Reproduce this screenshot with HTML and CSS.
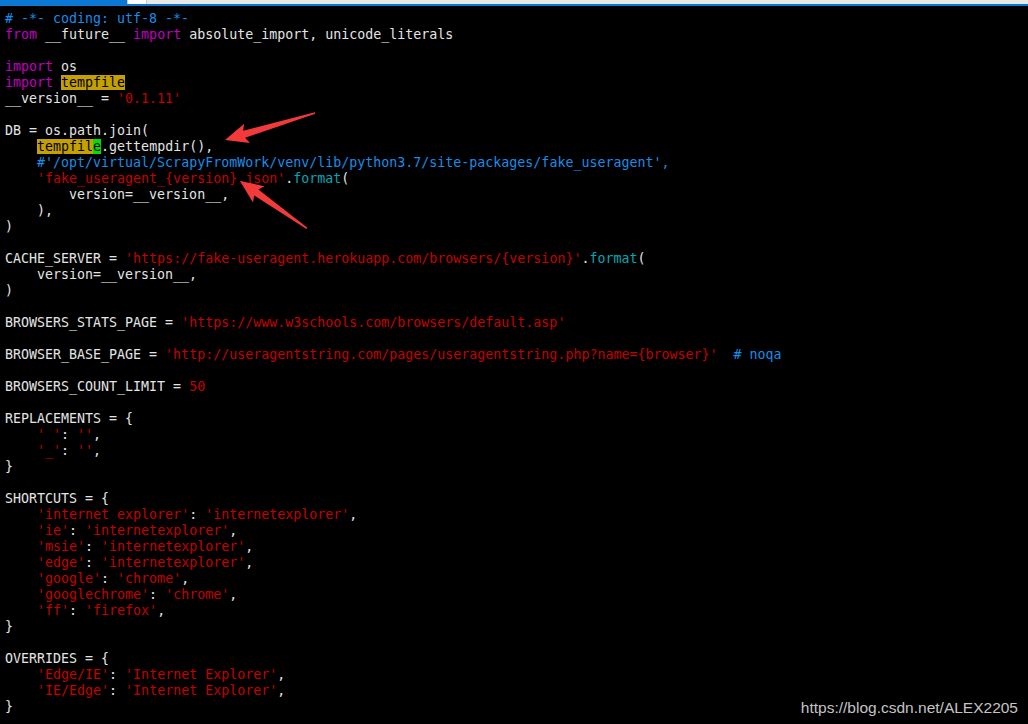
FILE: index.html
```html
<!DOCTYPE html>
<html lang="en">
<head>
    <meta charset="UTF-8">
    <title>settings.py - vim</title>
    <link rel="stylesheet" href="styles.css">
</head>
<body>
    <div class="tabbar">
        <div class="tab-active"></div>
        <div class="tab-blank"></div>
        <div class="tab-rest"></div>
    </div>
    <div class="tabline"></div>

    <div class="screen">
<pre class="code"><span class="cm"># -*- coding: utf-8 -*-</span>
<span class="kw">from</span> __future__ <span class="kw">import</span> absolute_import, unicode_literals

<span class="kw">import</span> os
<span class="kw">import</span> <span class="hl">tempfile</span>
__version__ = <span class="st">'0.1.11'</span>

DB = os.path.join(
    <span class="hl">tempfil</span><span class="cur">e</span>.gettempdir(),
    <span class="cm">#'/opt/virtual/ScrapyFromWork/venv/lib/python3.7/site-packages/fake_useragent',</span>
    <span class="st">'fake_useragent_{version}.json'</span>.<span class="fn">format</span>(
        version=__version__,
    ),
)

CACHE_SERVER = <span class="st">'https://fake-useragent.herokuapp.com/browsers/{version}'</span>.<span class="fn">format</span>(
    version=__version__,
)

BROWSERS_STATS_PAGE = <span class="st">'https://www.w3schools.com/browsers/default.asp'</span>

BROWSER_BASE_PAGE = <span class="st">'http://useragentstring.com/pages/useragentstring.php?name={browser}'</span>  <span class="cm"># noqa</span>

BROWSERS_COUNT_LIMIT = <span class="st">50</span>

REPLACEMENTS = {
    <span class="st">' '</span>: <span class="st">''</span>,
    <span class="st">'_'</span>: <span class="st">''</span>,
}

SHORTCUTS = {
    <span class="st">'internet explorer'</span>: <span class="st">'internetexplorer'</span>,
    <span class="st">'ie'</span>: <span class="st">'internetexplorer'</span>,
    <span class="st">'msie'</span>: <span class="st">'internetexplorer'</span>,
    <span class="st">'edge'</span>: <span class="st">'internetexplorer'</span>,
    <span class="st">'google'</span>: <span class="st">'chrome'</span>,
    <span class="st">'googlechrome'</span>: <span class="st">'chrome'</span>,
    <span class="st">'ff'</span>: <span class="st">'firefox'</span>,
}

OVERRIDES = {
    <span class="st">'Edge/IE'</span>: <span class="st">'Internet Explorer'</span>,
    <span class="st">'IE/Edge'</span>: <span class="st">'Internet Explorer'</span>,
}</pre>

        <!-- annotation arrows drawn over the code -->
        <svg class="arrows" width="1028" height="718" viewBox="0 6 1028 718">
            <g transform="translate(225,140) rotate(-16.7)">
                <polygon points="0,0 23,-10 20,-3.6 94,-0.7 94,0.7 20,3.6 23,10"/>
            </g>
            <g transform="translate(240,181) rotate(35.3)">
                <polygon points="0,0 23,-10 20,-3.6 82,-0.8 82,0.8 20,3.6 23,10"/>
            </g>
        </svg>

        <div class="watermark">https://blog.csdn.net/ALEX2205</div>
    </div>
</body>
</html>
```

FILE: styles.css
```css
body {
    margin: 0;
    background-color: #000;
    overflow: hidden;
}
.tabbar {
    display: flex;
    height: 4px;
}
.tab-active {
    width: 127px;
    background: #0a78d4;
}
.tab-blank {
    width: 18px;
    background: #fff;
    border-left: 1px solid #c8c8c8;
    border-right: 1px solid #c8c8c8;
}
.tab-rest {
    flex: 1;
    background: #e8e8e8;
}
.tabline {
    height: 2px;
    background: #0a78d4;
}
.screen {
    position: relative;
    height: 718px;
}
.code {
    margin: 0;
    padding: 5px 0 0 5px;
    font-family: "DejaVu Sans Mono", monospace;
    font-size: 13.3px;
    line-height: 16px;
    color: #e4e4e4;
}
.cm {
    color: #1a8ce8;
}
.kw {
    color: #c000c0;
}
.st {
    color: #c40000;
}
.fn {
    color: #00a9b2;
}
.hl {
    background: #c4a000;
    color: #000;
}
.cur {
    background: #00e000;
    color: #000;
}
.arrows {
    position: absolute;
    left: 0;
    top: 0;
}
.arrows polygon {
    fill: #f23a3a;
}
.watermark {
    position: absolute;
    right: 10px;
    bottom: 7px;
    font-family: "Liberation Sans", Arial, sans-serif;
    font-size: 15.5px;
    color: #c4c4c4;
}
```
